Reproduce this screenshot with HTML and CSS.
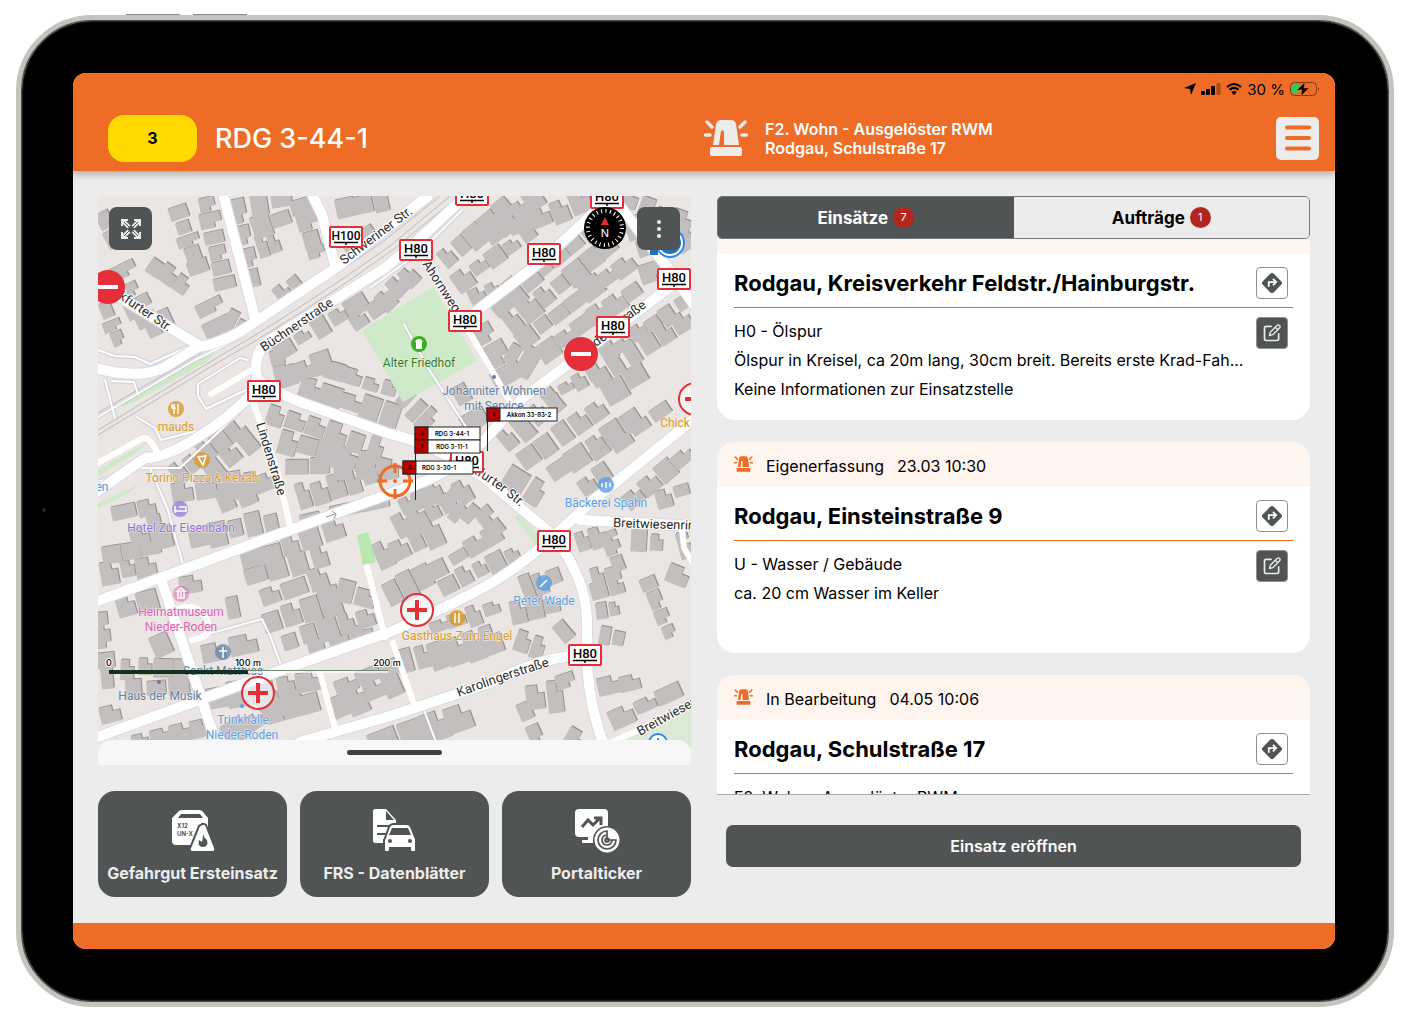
FILE: index.html
```html
<!DOCTYPE html>
<html lang="de">
<head>
  <meta charset="UTF-8">
  <title>RDG 3-44-1</title>
  <link rel="stylesheet" href="styles.css">
</head>
<body>

<!-- shared icons -->
<svg class="sprite" aria-hidden="true">
  <symbol id="siren" viewBox="0 0 44 36">
    <path d="M9 25 L12 4 Q13 0 17 0 H27 Q31 0 32 4 L35 25 H20 V12 Q19 9 17 11 L15 25 Z"/>
    <rect x="6" y="27" width="32" height="9" rx="2"/>
    <path d="M3 2 L8 7 M1.500 15 H6 M41 2 L36 7 M42.500 15 H38" stroke="currentColor" stroke-width="3.500" stroke-linecap="round"/>
  </symbol>
  <symbol id="route" viewBox="0 0 24 24">
    <path d="M12 1 Q13 1 14 2 L22 10 Q24 12 22 14 L14 22 Q12 24 10 22 L2 14 Q0 12 2 10 L10 2 Q11 1 12 1 Z"/>
    <path d="M8.500 16 V11 H15 M13 7.500 L16.500 11 L13 14.500" fill="none" stroke="#fff" stroke-width="2"/>
  </symbol>
  <symbol id="edit" viewBox="0 0 24 24">
    <path d="M11 4 H5 Q3 4 3 6 V19 Q3 21 5 21 H18 Q20 21 20 19 V13" fill="none" stroke="#ececec" stroke-width="2" stroke-linecap="round"/>
    <path d="M18 3 Q19.500 1.500 21 3 T21 6 L13 14 L9 15 L10 11 Z M16 5 L19 8" fill="none" stroke="#ececec" stroke-width="1.600" stroke-linejoin="round"/>
  </symbol>
</svg>

<div class="tablet">
  <div class="screen">

    <header class="header">
      <div class="status">
        <svg width="12" height="12" viewBox="0 0 12 12"><path d="M12 0 L7 12 L6 6 L0 5 Z"/></svg>
        <svg width="20" height="12" viewBox="0 0 20 12"><rect y="8" width="4" height="4" rx="1"/><rect x="5" y="6" width="4" height="6" rx="1"/><rect x="10" y="3" width="4" height="9" rx="1"/><rect x="15.500" width="4" height="12" rx="1" opacity=".3"/></svg>
        <svg width="16" height="12" viewBox="0 0 16 12"><path d="M1 4 Q8 -2 15 4 M3.500 6.800 Q8 3 12.500 6.800" fill="none" stroke="#000" stroke-width="2"/><path d="M8 12 L5.200 9 Q8 7 10.800 9 Z"/></svg>
        <span>30 %</span>
        <svg width="30" height="14" viewBox="0 0 30 14"><rect x=".5" y=".5" width="26" height="13" rx="4" fill="none" stroke="#7d3a18"/><path d="M28 5 Q30 7 28 9 Z" fill="#7d3a18"/><path d="M5 2 H10 L8 12 H5 Q2 12 2 9 V5 Q2 2 5 2 Z" fill="#34c759"/><path d="M15 0 L7 8 H12 L11 14 L19 6 H14 Z" stroke="#ee6c26" stroke-width=".5"/></svg>
      </div>
      <div class="header-row">
        <div class="unit">
          <button class="state">3</button>
          <h1>RDG 3-44-1</h1>
        </div>
        <div class="alarm">
          <svg class="alarm-icon"><use href="#siren"/></svg>
          <p>F2. Wohn - Ausgelöster RWM<br>Rodgau, Schulstraße 17</p>
          <button class="menu" aria-label="Menü">
            <svg width="26" height="26" viewBox="0 0 26 26"><path d="M2 2.500 H24 M2 13 H24 M2 23.500 H24" stroke="#ee6c26" stroke-width="4" stroke-linecap="round"/></svg>
          </button>
        </div>
      </div>
    </header>

    <main class="content">
      <section class="left">
        <div class="map">
          <svg class="map-canvas" viewBox="98 196 593 569" preserveAspectRatio="xMidYMid slice">
            <defs>
              <symbol id="h80" viewBox="0 0 34 22" width="34" height="22">
                <rect x="1" y="1" width="32" height="20" rx="1" fill="#fff" stroke="#e62e39" stroke-width="2"/>
                <text x="17" y="14" class="sign">H80</text>
                <path d="M5 16.500 H29 M17 16 V19" stroke="#000" stroke-width="1.500"/>
              </symbol>
              <symbol id="noentry" viewBox="0 0 34 34" width="34" height="34">
                <circle cx="17" cy="17" r="17" fill="#e62e39"/>
                <rect x="7" y="15" width="20" height="4" fill="#fff"/>
              </symbol>
              <symbol id="aid" viewBox="0 0 34 34" width="34" height="34">
                <circle cx="17" cy="17" r="16" fill="#fff" fill-opacity=".6" stroke="#e62e39" stroke-width="2"/>
                <path d="M17 7 V27 M7 17 H27" stroke="#e62e39" stroke-width="4"/>
              </symbol>
              <path id="way-frankfurt" d="M440 459 Q488 474 536 522"/>
              <path id="way-karolinger" d="M459 697 Q500 681 556 664"/>
            </defs>

            <rect x="98" y="196" width="593" height="569" fill="#ebe6e4"/>

            <g id="buildings"></g>

            <g fill="#cfeac8">
              <path d="M362 330 L433 287 L477 361 L403 402 Z"/>
              <path d="M121 405 L190 362 L217 352 L205 363 L125 407 Z"/>
              <path d="M98 470 L150 440 L140 450 L98 476 Z"/>
              <path d="M98 503 L140 484 L130 492 L98 508 Z"/>
              <path d="M518 514 L540 536 L537 546 L515 518 Z"/>
              <path d="M357 535 L368 532 L376 562 L363 565 Z" fill="#b8e8ae"/>
              <path d="M623 734 L691 704 V765 H623 Z" fill="#dbead5"/>
            </g>

            <!-- railway -->
            <g class="rail">
              <path d="M98 430 L210 362 Q300 310 390 246 L450 196"/>
              <path d="M98 435 L212 366 Q304 314 394 249 L459 196"/>
              <path d="M98 413 L206 350 Q300 302 385 240 L440 196"/>
            </g>

            <!-- footpaths -->
            <g class="path">
              <path d="M98 350 L115 356 L135 357 L150 364 L190 346"/>
              <path d="M98 417 L195 360 L245 335"/>
              <path d="M105 380 L115 418 M112 381 L134 382 L138 394 M137 417 L155 428 L161 440 L196 431"/>
              <path d="M98 482 L140 468 L180 468 L240 412"/>
              <path d="M206 409 L198 396 L198 384 L240 358 L248 360 M206 409 L246 390"/>
              <path d="M150 468 L168 510 L183 565"/>
              <path d="M404 324 L428 368 L470 433"/>
              <path d="M212 633 L262 619 L271 638 L282 668"/>
              <path d="M424 710 L436 742"/>
              <path d="M370 288 L420 252 L462 210"/>
            </g>

            <g class="road-edge">
              <path d="M222 190 L255 318 M310 190 L322 215 L335 265"/>
              <path d="M95 368 Q142 380 165 367 L198 347 Q225 343 255 322 L340 265 L428 196"/>
              <path d="M472 190 L415 243 L385 268 L270 340 Q252 352 257 378 Q262 386 300 402 L390 434 Q430 442 483 477 L553 535 Q586 578 587 620 V657 Q588 705 606 750"/>
              <path d="M258 388 Q230 418 195 439 Q165 458 145 458 L95 493"/>
              <path d="M108 290 L200 346"/>
              <path d="M95 602 L290 530 L400 490 Q455 474 487 437 L524 397 L570 363 L695 268"/>
              <path d="M470 316 L543 260 L612 196 L667 267 L695 306"/>
              <path d="M553 537 L590 503 L695 418 M580 520 L695 526"/>
              <path d="M553 537 Q510 575 473 593 Q430 615 390 632 L290 667 L95 738"/>
              <path d="M162 582 L213 733 L222 765"/>
              <path d="M574 656 Q540 658 490 683 L390 716 L300 742"/>
            </g>
            <g class="road">
              <path d="M222 190 L255 318 M310 190 L322 215 L335 265"/>
              <path d="M95 368 Q142 380 165 367 L198 347 Q225 343 255 322 L340 265 L428 196"/>
              <path d="M472 190 L415 243 L385 268 L270 340 Q252 352 257 378 Q262 386 300 402 L390 434 Q430 442 483 477 L553 535 Q586 578 587 620 V657 Q588 705 606 750"/>
              <path d="M258 388 Q230 418 195 439 Q165 458 145 458 L95 493"/>
              <path d="M108 290 L200 346"/>
              <path d="M95 602 L290 530 L400 490 Q455 474 487 437 L524 397 L570 363 L695 268"/>
              <path d="M470 316 L543 260 L612 196 L667 267 L695 306"/>
              <path d="M553 537 L590 503 L695 418 M580 520 L695 526"/>
              <path d="M553 537 Q510 575 473 593 Q430 615 390 632 L290 667 L95 738"/>
              <path d="M162 582 L213 733 L222 765"/>
              <path d="M574 656 Q540 658 490 683 L390 716 L300 742"/>
            </g>
            <g class="lane">
              <path d="M253 402 L277 470 L291 530"/>
              <path d="M418 250 L470 333 L512 405"/>
              <path d="M367 567 L385 637 M320 673 L335 728 M393 643 L415 707"/>
              <path d="M211 394 L250 371 M98 463 L143 438 Q150 437 157 452"/>
              <path d="M606 745 L691 706 M682 530 L684 548 L695 566"/>
              <path d="M177 609 Q200 602 208 622 Q215 636 192 640"/>
            </g>

            <g class="street">
              <text transform="translate(344 265) rotate(-37)">Schweriner Str.</text>
              <text transform="translate(264 352) rotate(-34)">Büchnerstraße</text>
              <text transform="translate(118 298) rotate(34)">kfurter Str.</text>
              <text transform="translate(256 424) rotate(73)">Lindenstraße</text>
              <text transform="translate(422 264) rotate(57)">Ahornweg</text>
              <text transform="translate(596 347) rotate(-36)">de</text>
              <text transform="translate(626 322) rotate(-36)">raße</text>
              <text><textPath href="#way-frankfurt" startOffset="8">Frankfurter Str.</textPath></text>
              <text><textPath href="#way-karolinger">Karolingerstraße</textPath></text>
              <text transform="translate(613 527) rotate(2)">Breitwiesenring</text>
              <text transform="translate(640 736) rotate(-29)">Breitwiesenring</text>
            </g>
            <path d="M326 517 L335 514 M332 511 L336 514 L334 519" fill="none" stroke="#999"/>

            <!-- points of interest -->
            <g class="poi">
              <g fill="#d99a26">
                <circle cx="176" cy="409" r="8" opacity=".8"/><text x="176" y="431">mauds</text>
                <circle cx="202" cy="460" r="8" opacity=".8"/><text x="202" y="482">Torino Pizza &amp; Kebab</text>
                <circle cx="457" cy="618" r="8" opacity=".8"/><text x="457" y="640">Gasthaus Zum Engel</text>
                <text x="675" y="427">Chick</text>
              </g>
              <g fill="#9070d8"><circle cx="180" cy="509" r="8" opacity=".7"/><text x="181" y="532">Hotel Zur Eisenbahn</text></g>
              <g fill="#e060b0"><circle cx="181" cy="594" r="8" opacity=".5"/><text x="181" y="616">Heimatmuseum</text><text x="181" y="631">Nieder-Roden</text></g>
              <g fill="#5b7fa5">
                <circle cx="223" cy="652" r="8" opacity=".7"/><text x="223" y="675">Sankt Matthias</text>
                <circle cx="159" cy="682" r="2"/><text x="160" y="700">Haus der Musik</text>
                <circle cx="494" cy="377" r="2"/><text x="494" y="395">Johanniter Wohnen</text><text x="494" y="410">mit Service</text>
              </g>
              <g fill="#5b9fe0">
                <circle cx="242" cy="706" r="2"/><text x="243" y="724">Trinkhalle</text><text x="242" y="739">Nieder-Roden</text>
                <circle cx="606" cy="485" r="8" opacity=".8"/><text x="606" y="507">Bäckerei Spahn</text>
                <circle cx="544" cy="583" r="8" opacity=".8"/><text x="544" y="605">Peter Wade</text>
                <text x="102" y="491">en</text>
              </g>
              <circle cx="419" cy="344" r="8" fill="#3aae22"/><text x="419" y="367" fill="#2c7d1c">Alter Friedhof</text>
              <g fill="none" stroke="#fff" stroke-width="1.500">
                <path d="M174 404 V414 M178 404 V414 M172 404 V408 H176 M198 457 L206 456 L203 465 Z M455 613 V623 M459 613 V623"/>
                <path d="M175 506 V513 M175 511 H186 V507 H179 M177 598 H185 M178 597 V592 M181 597 V592 M184 597 V592 M177 591 L181 588 L185 591 Z"/>
                <path d="M223 647 V658 M219 651 H227 M602 487 V483 M606 488 V482 M610 487 V483 M540 587 L547 580"/>
              </g>
              <path d="M416 349 V342 H415 Q416 339 419 339 Q422 339 423 342 H422 V349 Z" fill="#fff"/>
            </g>
            <g fill="none" stroke="#2f86f0" stroke-width="2">
              <circle cx="670" cy="243" r="14" fill="#2672b8"/><circle cx="670" cy="243" r="12" stroke="#fff"/>
              <circle cx="658" cy="743" r="9" fill="#fff"/><path d="M658 738 V744"/>
            </g>
            <rect x="650" y="248" width="8" height="7" fill="#2672b8"/>

            <!-- hydrants and closures -->
            <use href="#h80" x="455" y="184"/>
            <use href="#h80" x="590" y="187"/>
            <use href="#h80" x="399" y="239"/>
            <use href="#h80" x="527" y="243"/>
            <use href="#h80" x="657" y="268"/>
            <use href="#h80" x="448" y="310"/>
            <use href="#h80" x="596" y="316"/>
            <use href="#h80" x="247" y="380"/>
            <use href="#h80" x="450" y="451"/>
            <use href="#h80" x="537" y="530"/>
            <use href="#h80" x="568" y="644"/>
            <rect x="330" y="227" width="32" height="20" rx="1" fill="#fff" stroke="#e62e39" stroke-width="2"/>
            <text x="346" y="240" class="sign long">H100</text>
            <path d="M334 242.500 H358 M346 242 V245" stroke="#000" stroke-width="1.500"/>
            <use href="#noentry" x="91" y="270"/>
            <use href="#noentry" x="564" y="337"/>
            <use href="#aid" x="400" y="593"/>
            <use href="#aid" x="241" y="676"/>
            <use href="#aid" x="678" y="382"/>

            <!-- own position -->
            <g fill="none" stroke="#ee6c26">
              <circle cx="395" cy="481" r="15" stroke-width="3"/>
              <path d="M395 463 V473 M395 489 V499 M377 481 H387 M403 481 H413" stroke-width="3"/>
            </g>
            <circle cx="395" cy="481" r="2" fill="#ee6c26"/>

            <!-- vehicles -->
            <path d="M487.500 420 V451 M415.500 452 V500" stroke="#222"/>
            <g class="vehicle" transform="translate(487 408)"><rect width="70" height="13"/><rect class="st" width="13" height="13"/><text x="5" y="9">4</text><text x="42" y="9" class="name">Akkon 33-83-2</text></g>
            <g class="vehicle" transform="translate(415 427)"><rect width="65" height="13"/><rect class="st" width="13" height="13"/><text x="5" y="9">4</text><text x="37" y="9" class="name">RDG 3-44-1</text></g>
            <g class="vehicle" transform="translate(415 440)"><rect width="65" height="13"/><rect class="st" width="13" height="13"/><text x="5" y="9">4</text><text x="37" y="9" class="name">RDG 3-11-1</text></g>
            <g class="vehicle" transform="translate(403 461)"><rect width="70" height="13"/><rect class="st" width="13" height="13"/><text x="5" y="9">4</text><text x="36" y="9" class="name">RDG 3-30-1</text></g>

            <!-- scale -->
            <rect x="109" y="670" width="139" height="4" fill="#17301a"/>
            <rect x="248" y="670" width="140" height="3" fill="#fff" opacity=".7"/>
            <path d="M248 670.500 H388" stroke="#6f8870"/>
            <g class="scale"><text x="109" y="666">0</text><text x="248" y="666">100 m</text><text x="387" y="666">200 m</text></g>
          </svg>

          <button class="map-btn expand" aria-label="Karte vergrößern">
            <svg width="20" height="20" viewBox="0 0 20 20"><path d="M1 7 V1 H7 M13 1 H19 V7 M19 13 V19 H13 M7 19 H1 V13" fill="none" stroke="#ececec" stroke-width="2"/><path d="M2 2 L8 8 M18 2 L12 8 M2 18 L8 12 M18 18 L12 12" stroke="#ececec" stroke-width="4"/><path d="M3 3 L17 17 M17 3 L3 17" stroke="#505455" stroke-width="1"/></svg>
          </button>
          <svg class="compass" viewBox="0 0 42 42">
            <circle cx="21" cy="21" r="21"/>
            <circle cx="21" cy="21" r="17" fill="none" stroke="#fff" stroke-width="4" stroke-dasharray="1 3.450"/>
            <path d="M21 10 L25 18 H17 Z" fill="#e62e39"/>
            <text x="21" y="30">N</text>
          </svg>
          <button class="map-btn more" aria-label="Mehr">
            <svg width="4" height="18" viewBox="0 0 4 18"><circle cx="2" cy="2" r="2"/><circle cx="2" cy="9" r="2"/><circle cx="2" cy="16" r="2"/></svg>
          </button>
          <div class="sheet"><span class="grip"></span></div>
        </div>

        <nav class="apps">
          <button class="app">
            <svg width="46" height="44" viewBox="0 0 46 44">
              <path d="M8 3 Q9 1 12 1 H29 Q32 1 33 3 L38 9 V32 Q38 36 34 36 H6 Q2 36 2 32 V9 Z"/>
              <path d="M11 5 H30 L33 9 H8 Z" fill="#505455"/>
              <text x="7" y="19">X12</text><text x="7" y="27">UN-X</text>
              <path d="M32 15 Q34 14 36 16 L45 39 Q46 43 42 43 H23 Q19 43 20 39 L29 17 Z" stroke="#505455" stroke-width="2"/>
              <path d="M33 25 Q34 29 37 31 Q39 38 33 38 Q27 38 29 31 L32 33 Q33 29 33 25 Z" fill="#505455"/>
            </svg>
            Gefahrgut Ersteinsatz
          </button>
          <button class="app">
            <svg width="46" height="44" viewBox="0 0 46 44">
              <path d="M3 0 H14 L24 11 V34 H3 Q1 34 1 32 V2 Q1 0 3 0 Z"/>
              <path d="M14 2 V11 H22 Z M5 16 H20 V18 H5 Z M5 24 H14 V26 H5 Z" fill="#505455"/>
              <path d="M13 29 L17 18 Q18 15 22 15 H34 Q38 15 39 18 L43 28 Q44 29 44 31 V42 Q44 43 42 43 H40 Q38 43 38 41 V39 H18 V41 Q18 43 16 43 H14 Q12 43 12 41 V31 Z" stroke="#505455" stroke-width="2"/>
              <path d="M20 19 H36 L39 26 H17 Z" fill="#505455"/>
              <circle cx="18" cy="32" r="2" fill="#505455"/><circle cx="38" cy="32" r="2" fill="#505455"/>
            </svg>
            FRS - Datenblätter
          </button>
          <button class="app">
            <svg width="46" height="44" viewBox="0 0 46 44">
              <path d="M5 0 H30 Q34 0 34 4 V28 H5 Q1 28 1 24 V4 Q1 0 5 0 Z M14 28 H24 V34 H8 V31 H14 Z"/>
              <path d="M8 18 L14 11 L19 16 L26 9 M20 9 H27 V16" fill="none" stroke="#505455" stroke-width="3"/>
              <circle cx="33" cy="31" r="14" fill="#505455"/><circle cx="33" cy="31" r="12.500"/>
              <g fill="none" stroke="#505455" stroke-width="1.700">
                <path d="M33 22 A9 9 0 1 0 42 31 H33 Z M33 26 A5 5 0 1 0 38 31"/>
                <circle cx="33" cy="31" r="2"/>
              </g>
            </svg>
            Portalticker
          </button>
        </nav>
      </section>

      <section class="right">
        <div class="tabs" role="tablist">
          <button class="tab active" role="tab" aria-selected="true">Einsätze <span class="badge">7</span></button>
          <button class="tab" role="tab" aria-selected="false">Aufträge <span class="badge">1</span></button>
        </div>

        <div class="list">
          <article class="card">
            <div class="card-head"></div>
            <div class="card-title">
              <h2>Rodgau, Kreisverkehr Feldstr./Hainburgstr.</h2>
              <button class="icon-btn" aria-label="Route"><svg width="22" height="22"><use href="#route"/></svg></button>
            </div>
            <div class="card-body">
              <div class="info">
                <p>H0 - Ölspur</p>
                <p>Ölspur in Kreisel, ca 20m lang, 30cm breit. Bereits erste Krad-Fah...</p>
                <p>Keine Informationen zur Einsatzstelle</p>
              </div>
              <button class="icon-btn dark" aria-label="Bearbeiten"><svg width="20" height="20"><use href="#edit"/></svg></button>
            </div>
          </article>

          <article class="card">
            <div class="card-head">
              <svg class="card-icon"><use href="#siren"/></svg>
              <span>Eigenerfassung</span>
              <span>23.03 10:30</span>
            </div>
            <div class="card-title">
              <h2>Rodgau, Einsteinstraße 9</h2>
              <button class="icon-btn" aria-label="Route"><svg width="22" height="22"><use href="#route"/></svg></button>
            </div>
            <div class="card-body">
              <div class="info">
                <p>U - Wasser / Gebäude</p>
                <p>ca. 20 cm Wasser im Keller</p>
              </div>
              <button class="icon-btn dark" aria-label="Bearbeiten"><svg width="20" height="20"><use href="#edit"/></svg></button>
            </div>
          </article>

          <article class="card">
            <div class="card-head">
              <svg class="card-icon"><use href="#siren"/></svg>
              <span>In Bearbeitung</span>
              <span>04.05 10:06</span>
            </div>
            <div class="card-title">
              <h2>Rodgau, Schulstraße 17</h2>
              <button class="icon-btn" aria-label="Route"><svg width="22" height="22"><use href="#route"/></svg></button>
            </div>
            <div class="card-body">
              <div class="info">
                <p>F2. Wohn - Ausgelöster RWM</p>
              </div>
            </div>
          </article>
        </div>

        <button class="open-btn">Einsatz eröffnen</button>
      </section>
    </main>

    <footer class="footer"></footer>
  </div>
</div>

<script src="map.js"></script>
</body>
</html>
```

FILE: styles.css
```css
* {
  box-sizing: border-box;
}
body {
  margin: 0;
  padding: 15px 16px 20px;
  height: 100vh;
  background: #fff;
  font-family: Inter, "Liberation Sans", sans-serif;
  color: #000;
}
h1, h2, p {
  margin: 0;
}
button {
  font-family: inherit;
  border: none;
  padding: 0;
}
.sprite {
  position: absolute;
  width: 0;
  height: 0;
}

/* device */
.tablet {
  position: relative;
  height: 100%;
  padding: 53px 54px 53px 52px;
  background: #000;
  border: 5px solid #c4c3be;
  border-radius: 76px;
  box-shadow: inset 0 0 0 1px #4a4a48, inset 0 0 2px 1px #777, 0 0 0 1px #a9a8a2 inset;
}
.tablet::before {
  content: "";
  position: absolute;
  left: 105px;
  top: -6px;
  width: 54px;
  height: 1px;
  background: #8a8a86;
  box-shadow: 67px 0 #8a8a86;
}
.tablet::after {
  content: "";
  position: absolute;
  left: 21px;
  top: 488px;
  width: 4px;
  height: 4px;
  border-radius: 50%;
  background: #0d2b45;
}
.screen {
  height: 100%;
  display: flex;
  flex-direction: column;
  background: #ececec;
  border-radius: 13px;
  overflow: hidden;
}

/* header */
.header {
  background: #ee6c26;
  box-shadow: 0 2px 8px rgba(0, 0, 0, .35);
}
.status {
  display: flex;
  justify-content: flex-end;
  align-items: center;
  gap: 5px;
  height: 32px;
  padding-right: 15px;
  font-size: 15px;
}
.header-row {
  display: grid;
  grid-template-columns: 1fr 1fr;
  height: 66px;
}
.unit {
  display: flex;
  align-items: center;
  gap: 18px;
  padding-left: 35px;
}
.state {
  width: 89px;
  height: 47px;
  border-radius: 16px;
  background: #ffd900;
  color: #000;
  font-size: 16px;
  font-weight: 700;
}
h1 {
  color: #fff;
  font-size: 27px;
  font-weight: 500;
}
.alarm {
  display: flex;
  align-items: center;
  gap: 17px;
  padding-right: 16px;
  color: #ececec;
  fill: #ececec;
}
.alarm-icon {
  width: 44px;
  height: 36px;
}
.alarm p {
  flex: 1;
  padding-top: 2px;
  color: #fff;
  font-size: 16px;
  font-weight: 600;
  line-height: 19px;
}
.menu {
  display: flex;
  align-items: center;
  justify-content: center;
  width: 43px;
  height: 43px;
  border-radius: 5px;
  background: #ececec;
}

/* content */
.content {
  flex: 1;
  min-height: 0;
  display: grid;
  grid-template-columns: 1fr 1fr;
  gap: 26px;
  padding: 25px 25px 26px;
}
.left, .right {
  display: flex;
  flex-direction: column;
  min-width: 0;
  min-height: 0;
}
.left {
  gap: 26px;
}

/* map */
.map {
  position: relative;
  flex: 1;
  min-height: 0;
  overflow: hidden;
}
.map-canvas {
  display: block;
  width: 100%;
  height: 100%;
}
.road-edge, .road, .lane, .path, .rail {
  fill: none;
  stroke-linejoin: round;
  stroke-linecap: round;
}
.road-edge {
  stroke: #d9dbe3;
  stroke-width: 12px;
}
.road {
  stroke: #fff;
  stroke-width: 10px;
}
.lane {
  stroke: #fff;
  stroke-width: 6px;
}
.path {
  stroke: #fff;
  stroke-width: 2px;
  filter: drop-shadow(0 0 1px #aab0c4);
}
.rail {
  stroke: #bdbbb8;
  stroke-width: 1px;
}
.street {
  font-family: Roboto, sans-serif;
  font-size: 13px;
  fill: #2b2b2b;
  stroke: #fff;
  stroke-width: 2px;
  paint-order: stroke;
}
.poi text {
  font-family: Roboto, sans-serif;
  font-size: 12px;
  text-anchor: middle;
  stroke: #f2efee;
  stroke-width: 1px;
  paint-order: stroke;
}
.sign {
  font-family: Roboto, sans-serif;
  font-size: 13px;
  font-weight: 500;
  text-anchor: middle;
}
.sign.long {
  font-size: 12px;
}
.vehicle rect {
  fill: #fff;
  stroke: #222;
  stroke-width: 1px;
}
.vehicle .st {
  fill: #b80000;
}
.vehicle text {
  font-size: 6px;
}
.vehicle .name {
  font-weight: 600;
  text-anchor: middle;
}
.scale {
  font-size: 9px;
  font-weight: 500;
  text-anchor: middle;
  stroke: #fff;
  stroke-width: 2px;
  paint-order: stroke;
}
.map-btn {
  position: absolute;
  top: 11px;
  display: flex;
  align-items: center;
  justify-content: center;
  width: 43px;
  height: 43px;
  border-radius: 8px;
  background: #505455;
}
.expand {
  left: 11px;
}
.more {
  right: 11px;
  fill: #ececec;
}
.compass {
  position: absolute;
  top: 11px;
  right: 65px;
  width: 42px;
  height: 42px;
}
.compass text {
  font-size: 11px;
  fill: #fff;
  text-anchor: middle;
}
.sheet {
  position: absolute;
  left: 0;
  right: 0;
  bottom: 0;
  height: 25px;
  background: #f7f7f7;
  border-radius: 13px 13px 0 0;
}
.grip {
  display: block;
  width: 95px;
  height: 5px;
  margin: 10px auto;
  border-radius: 3px;
  background: #404040;
}

/* app buttons */
.apps {
  display: grid;
  grid-template-columns: repeat(3, 1fr);
  gap: 13px;
}
.app {
  display: flex;
  flex-direction: column;
  align-items: center;
  gap: 10px;
  height: 106px;
  padding-top: 18px;
  border-radius: 17px;
  background: #505455;
  color: #ececec;
  fill: #fff;
  font-size: 16px;
  font-weight: 700;
  line-height: 20px;
  white-space: nowrap;
}
.app text {
  font-size: 6px;
  font-weight: 700;
  fill: #505455;
}

/* tabs */
.tabs {
  display: grid;
  grid-template-columns: 1fr 1fr;
  height: 43px;
  flex: none;
  border: 1px solid #75767a;
  border-radius: 5px;
  overflow: hidden;
}
.tab {
  display: flex;
  align-items: center;
  justify-content: center;
  gap: 5px;
  background: #ececec;
  color: #000;
  font-size: 17px;
  font-weight: 700;
}
.tab.active {
  background: #505455;
  color: #fff;
}
.badge {
  width: 21px;
  height: 21px;
  border-radius: 50%;
  background: #b3261e;
  color: #fff;
  font-size: 11px;
  font-weight: 400;
  line-height: 21px;
}

/* list */
.list {
  flex: 1;
  min-height: 0;
  display: flex;
  flex-direction: column;
  gap: 22px;
  overflow: hidden;
  border-bottom: 1px solid #a9a9a9;
}
.card {
  flex: none;
  height: 211px;
  border-radius: 18px;
  background: #fff;
  overflow: hidden;
}
/* list is scrolled a little */
.card:first-child {
  margin-top: -30px;
}
.card-head {
  display: flex;
  align-items: center;
  gap: 13px;
  height: 45px;
  padding: 2px 17px 0;
  background: #fff4ee;
  font-size: 16px;
}
.card-icon {
  width: 19px;
  height: 16px;
  margin: 0 0 4px;
  color: #ee6c26;
  fill: #ee6c26;
}
.card-title {
  display: flex;
  align-items: center;
  justify-content: space-between;
  height: 54px;
  margin: 0 17px;
  padding: 4px 5px 0 0;
  border-bottom: 1px solid #ee6c26;
}
h2 {
  font-size: 22px;
  font-weight: 700;
  white-space: nowrap;
}
.card-body {
  display: flex;
  justify-content: space-between;
  padding: 9px 22px 0 17px;
}
.info {
  min-width: 0;
  font-size: 16px;
  line-height: 29px;
  white-space: nowrap;
}
.icon-btn {
  display: flex;
  align-items: center;
  justify-content: center;
  flex: none;
  width: 32px;
  height: 32px;
  border: 1px solid #8d8f90;
  border-radius: 4px;
  background: #fff;
  fill: #505455;
}
.icon-btn.dark {
  background: #505455;
}
.open-btn {
  flex: none;
  height: 42px;
  margin: 30px 9px;
  border-radius: 7px;
  background: #505455;
  color: #fff;
  font-size: 16px;
  font-weight: 600;
}

.footer {
  height: 26px;
  background: #ee6c26;
}
```

FILE: map.js
```js
// rows of houses: x1, y1, x2, y2, depth, count
const rows = [
  [100, 212, 118, 245, 16, 2], [98, 290, 120, 345, 16, 4], [118, 265, 150, 330, 22, 4], [148, 262, 188, 290, 18, 3], [146, 330, 172, 318, 20, 2],
  [176, 206, 200, 275, 18, 5], [205, 198, 226, 290, 22, 6], [205, 300, 222, 335, 28, 2], [225, 320, 245, 330, 18, 2],
  [236, 200, 256, 290, 12, 4], [248, 205, 292, 198, 20, 2], [252, 228, 290, 215, 18, 2], [256, 250, 280, 242, 20, 2], [278, 300, 302, 280, 18, 2], [300, 198, 318, 262, 20, 4],
  [336, 212, 390, 200, 18, 3], [345, 250, 372, 230, 14, 2],
  [275, 355, 365, 300, 16, 5], [350, 325, 400, 292, 14, 3], [380, 305, 415, 270, 20, 3], [278, 378, 330, 360, 18, 3], [275, 350, 282, 380, 18, 2],
  [440, 265, 510, 205, 20, 5], [470, 245, 540, 196, 20, 5], [455, 285, 535, 228, 18, 5], [510, 230, 590, 198, 20, 4], [470, 300, 500, 285, 18, 2],
  [492, 310, 595, 225, 22, 7], [505, 328, 615, 242, 20, 7], [518, 345, 632, 260, 18, 7], [540, 356, 640, 285, 18, 6], [478, 325, 512, 385, 24, 3], [505, 350, 535, 368, 24, 2], [620, 200, 690, 225, 18, 4], [632, 215, 655, 285, 18, 3], [664, 212, 690, 250, 18, 3],
  [600, 358, 690, 300, 16, 6], [590, 380, 690, 318, 20, 6], [545, 400, 600, 370, 14, 4], [605, 395, 645, 372, 20, 2],
  [500, 445, 560, 395, 22, 4], [520, 465, 605, 405, 22, 5], [550, 475, 640, 415, 20, 5], [590, 460, 670, 405, 16, 4],
  [505, 475, 545, 500, 26, 2], [580, 490, 610, 470, 18, 2], [625, 505, 690, 450, 20, 4], [655, 500, 690, 490, 16, 2],
  [300, 385, 400, 418, 20, 5], [325, 370, 398, 392, 16, 4], [400, 395, 432, 425, 20, 3], [455, 385, 480, 430, 20, 2],
  [265, 412, 385, 452, 22, 6], [278, 440, 395, 472, 20, 6], [285, 468, 400, 468, 20, 5], [295, 500, 395, 470, 20, 6], [300, 520, 390, 500, 12, 3],
  [172, 478, 240, 425, 18, 5], [205, 475, 255, 435, 20, 3], [170, 495, 265, 480, 22, 4], [215, 505, 275, 480, 22, 3], [190, 540, 280, 520, 22, 5],
  [112, 515, 158, 505, 20, 2], [130, 540, 170, 530, 26, 2], [102, 555, 160, 545, 14, 3], [100, 575, 155, 565, 18, 3], [115, 610, 158, 598, 20, 2], [100, 612, 108, 690, 14, 4],
  [180, 585, 200, 582, 18, 1], [225, 608, 240, 605, 26, 1], [198, 655, 258, 642, 26, 2], [150, 650, 172, 640, 22, 1], [118, 668, 190, 670, 18, 4], [122, 690, 190, 685, 18, 3], [100, 715, 120, 710, 18, 1],
  [240, 560, 300, 545, 20, 3], [245, 580, 330, 555, 18, 4], [298, 540, 345, 525, 18, 2], [258, 600, 330, 575, 20, 3], [262, 625, 340, 600, 24, 4], [280, 645, 375, 615, 20, 5], [335, 590, 375, 600, 18, 2], [305, 650, 372, 632, 14, 3],
  [375, 560, 440, 530, 26, 4], [385, 595, 445, 565, 24, 4], [395, 530, 470, 490, 22, 5], [400, 510, 440, 490, 18, 3], [445, 495, 475, 520, 22, 3], [480, 510, 500, 535, 18, 2], [440, 590, 520, 550, 16, 5], [450, 560, 500, 530, 16, 3],
  [520, 590, 560, 575, 20, 3], [510, 615, 560, 605, 20, 3], [430, 630, 500, 605, 16, 4], [430, 660, 500, 635, 24, 4], [515, 640, 545, 650, 18, 2], [555, 620, 572, 640, 18, 1], [395, 665, 450, 650, 20, 3],
  [575, 545, 605, 535, 18, 2], [605, 530, 620, 570, 16, 3], [630, 540, 665, 542, 20, 2], [590, 580, 620, 572, 16, 2], [590, 595, 625, 585, 14, 2], [595, 612, 620, 608, 14, 2], [598, 635, 625, 640, 14, 2], [645, 575, 672, 640, 16, 4], [665, 570, 690, 580, 18, 1], [680, 530, 688, 560, 12, 2],
  [525, 700, 565, 695, 24, 2], [562, 672, 568, 690, 20, 1], [598, 690, 640, 680, 14, 2], [610, 722, 680, 690, 18, 3],
  [400, 740, 470, 715, 24, 3], [520, 700, 540, 745, 16, 2], [565, 735, 582, 745, 18, 1],
  [225, 740, 300, 690, 22, 4], [205, 700, 320, 680, 20, 5], [265, 715, 318, 700, 18, 3], [330, 710, 400, 680, 24, 4], [130, 745, 210, 725, 18, 4], [370, 745, 395, 735, 18, 1], [335, 690, 400, 665, 16, 3]
];

let seed = 7;
function rnd() {
  seed = (seed * 1103515245 + 12345) % 2147483648;
  return seed / 2147483648;
}

function house(x, y, w, h, a) {
  const c = Math.cos(a), s = Math.sin(a);
  // L-shaped outline
  const cut = rnd() > 0.45 ? 0.35 : 0;
  const pts = [[-w / 2, -h / 2], [w / 2 - w * cut, -h / 2], [w / 2 - w * cut, -h / 2 + h * cut], [w / 2, -h / 2 + h * cut], [w / 2, h / 2], [-w / 2, h / 2]];
  return "M" + pts.map(p => (x + p[0] * c - p[1] * s).toFixed(1) + " " + (y + p[0] * s + p[1] * c).toFixed(1)).join("L") + "Z";
}

let d = "";
rows.forEach(([x1, y1, x2, y2, depth, n]) => {
  const len = Math.hypot(x2 - x1, y2 - y1);
  const a = Math.atan2(y2 - y1, x2 - x1);
  for (let i = 0; i < n; i++) {
    const t = (i + 0.5) / n;
    const w = Math.min(len / n, 32) * (0.7 + 0.4 * rnd());
    const h = depth * (0.7 + 0.65 * rnd());
    d += house(x1 + (x2 - x1) * t, y1 + (y2 - y1) * t + rnd() * 4 - 2, w, h, a);
  }
});

document.getElementById("buildings").innerHTML =
  `<path d="${d}" fill="#96918e" transform="translate(1 -1)"/><path d="${d}" fill="#c3bfbe"/>`;
```
